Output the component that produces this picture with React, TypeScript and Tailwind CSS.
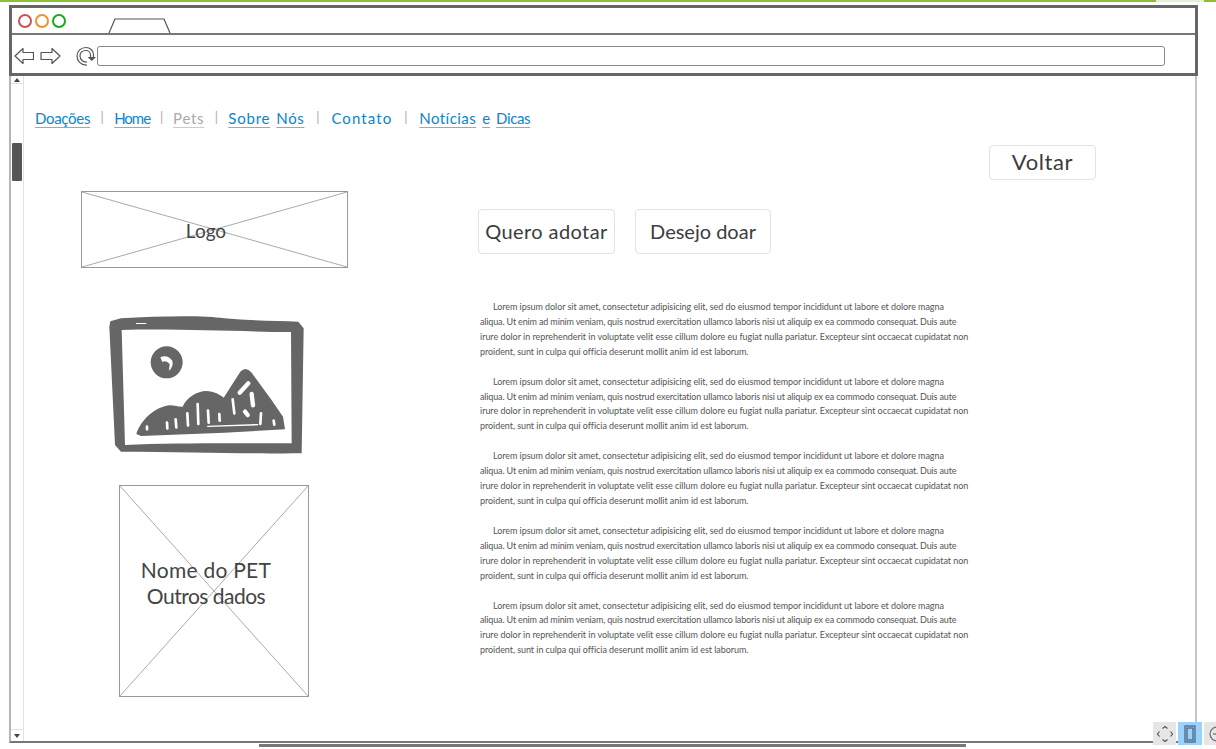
import React from "react";

const font = { fontFamily: '"Lato", "Noto Sans", sans-serif' };

const lines = [
  { t: "Lorem ipsum dolor sit amet, consectetur adipisicing elit, sed do eiusmod tempor incididunt ut labore et dolore magna", c: "pl-[13px] tracking-[-0.06px]" },
  { t: "aliqua. Ut enim ad minim veniam, quis nostrud exercitation ullamco laboris nisi ut aliquip ex ea commodo consequat. Duis aute", c: "tracking-[-0.15px]" },
  { t: "irure dolor in reprehenderit in voluptate velit esse cillum dolore eu fugiat nulla pariatur. Excepteur sint occaecat cupidatat non", c: "tracking-[-0.03px]" },
  { t: "proident, sunt in culpa qui officia deserunt mollit anim id est laborum.", c: "tracking-[-0.056px]" },
];

function Cross() {
  return (
    <svg className="absolute inset-0 w-full h-full" preserveAspectRatio="none" viewBox="0 0 100 100">
      <line x1="0" y1="0" x2="100" y2="100" stroke="#aaa" strokeWidth="1" vectorEffect="non-scaling-stroke" />
      <line x1="100" y1="0" x2="0" y2="100" stroke="#aaa" strokeWidth="1" vectorEffect="non-scaling-stroke" />
    </svg>
  );
}

function Btn({ children, c }: { children: React.ReactNode; c: string }) {
  return (
    <div className={`${c} h-full flex items-center justify-center whitespace-nowrap pb-[2px] border border-[#e2e2e2] rounded-sm text-[#3c3c3c]`}>
      {children}
    </div>
  );
}

function Sep({ w }: { w: string }) {
  return <span className={`${w} text-center text-[13px] text-[#aaa]`}>|</span>;
}

function Link({ children, gray, c }: { children: string; gray?: boolean; c: string }) {
  return (
    <span className={`${c} ${gray ? "text-[#aaa] decoration-[#ccc]" : "text-[#0a85cc] decoration-[#6bb8e6]"} underline underline-offset-[3px]`}>
      {children}
    </span>
  );
}

function PetIcon() {
  return (
    <svg width="230" height="170" viewBox="0 0 690 510" className="block">
      <path
        fill="#666"
        fillRule="evenodd"
        d="M58 64 L90 55 C200 48 340 45 400 55 C480 62 560 62 622 65 L638 85 L632 460 C500 462 300 455 90 455 L72 435 L55 80 Z M92 90 L102 435 C250 428 450 430 602 430 L600 96 C450 95 250 85 92 90 Z"
      />
      <path fill="#fff" d="M135 69 H166 V72 H135 Z" />
      <circle cx="227" cy="187" r="48" fill="#666" />
      <path d="M208 172 Q228 162 244 182 Q248 200 234 212 L236 192 Q226 180 214 186 Z" fill="#fff" />
      <path
        fill="#666"
        d="M136 402 C150 360 190 322 235 316 C255 316 265 322 275 320 C285 293 320 273 345 273 C370 273 388 285 398 293 L448 215 Q465 198 482 218 L540 298 L576 350 L582 388 L400 398 L150 408 Z"
      />
      <g fill="none" stroke="#fff" strokeLinecap="round">
        <path d="M168 380 L168 388 M228 368 L229 385 M254 358 L256 382 M289 340 L291 376 M320 312 L322 372 M351 332 L353 368 M385 342 L386 362 M425 298 L430 340 M510 340 L508 372 M548 362 L550 374" strokeWidth="8" />
        <path d="M446 278 L472 250 M482 282 L486 316 M462 335 L470 345" strokeWidth="13" />
        <path d="M350 379 L500 374" strokeWidth="4" />
      </g>
    </svg>
  );
}

export default function App() {
  return (
    <div className="relative w-[1216px] h-[749px] overflow-hidden bg-white text-[#333]" style={font}>
      {/* top progress strip */}
      <div className="flex h-[2px]">
        <div className="w-[1156px] bg-[#8bc034]" />
        <div className="w-[48px] bg-[#e6f0d4]" />
        <div className="flex-1 bg-[#8bc034]" />
      </div>

      {/* browser chrome */}
      <div className="ml-[9px] mt-[3px] w-[1189px] h-[71px] border-[3px] border-[#666] flex flex-col">
        <div className="h-[27px] border-b-2 border-[#777] flex items-center pl-[6px] relative">
          <div className="flex gap-[3px]">
            <div className="w-[14px] h-[14px] rounded-full border-2 border-[#c85555]" />
            <div className="w-[14px] h-[14px] rounded-full border-2 border-[#e8952f]" />
            <div className="w-[14px] h-[14px] rounded-full border-2 border-[#1aaa1a]" />
          </div>
          <svg width="64" height="16" viewBox="0 0 64 16" className="ml-[42px] self-end">
            <path d="M1 16 L7 2 L56 2 L62 16" fill="none" stroke="#555" strokeWidth="1.2" />
          </svg>
        </div>
        <div className="flex-1 flex items-center pl-[2px] pt-[4px]">
          <svg width="20" height="18" viewBox="0 0 20 18" className="shrink-0">
            <path d="M1 9 L9 1.5 L9 5.5 L19.5 5.5 L19.5 12.5 L9 12.5 L9 16.5 Z" fill="none" stroke="#555" strokeWidth="1.2" strokeLinejoin="round" />
          </svg>
          <svg width="21" height="18" viewBox="0 0 21 18" className="ml-[6px] shrink-0">
            <path d="M20 9 L12 1.5 L12 5.5 L1 5.5 L1 12.5 L12 12.5 L12 16.5 Z" fill="none" stroke="#555" strokeWidth="1.2" strokeLinejoin="round" />
          </svg>
          <svg width="20" height="20" viewBox="0 0 20 20" className="ml-[15px] shrink-0">
            <path d="M11 19 C4.5 19.5 1 14.5 1 10 C1 5 5 1.5 10 1.5 C14 1.5 17.5 4.5 17.5 8.5 L17.5 11 M11 16 C7 16.5 4 13.5 4 10 C4 6.5 6.5 4.5 10 4.5 C12.5 4.5 14.5 6.5 14.5 9 L14.5 11" fill="none" stroke="#555" strokeWidth="1.2" />
            <path d="M11.5 11 L20 11 L15.8 15 Z" fill="#555" />
          </svg>
          <div className="ml-[1px] w-[1068px] h-[20px] border border-[#888] rounded-[3px] shrink-0" />
        </div>
      </div>

      {/* page frame */}
      <div className="ml-[9px] w-[1188px] h-[667px] border-l-2 border-r-2 border-b-2 border-l-[#b5b5b5] border-r-[#c4c4c4] border-b-[#777] flex">
        {/* vertical scrollbar */}
        <div className="w-[13px] shrink-0 border-r border-[#e2e2e2] flex flex-col items-center relative">
          <div className="h-[8px] w-full border-b border-[#e2e2e2] flex justify-center">
            <div className="w-0 h-0 mt-[2px] border-x-[3px] border-x-transparent border-b-[4px] border-b-[#444]" />
          </div>
          <div className="mt-[59px] w-[10px] h-[38px] bg-[#555] rounded-[1px]" />
          <div className="mt-auto h-[12px] w-full border-t border-[#e2e2e2] flex justify-center items-center">
            <div className="w-0 h-0 border-x-[3px] border-x-transparent border-t-[4px] border-t-[#444]" />
          </div>
        </div>

        {/* page content */}
        <div className="flex-1 flex flex-col min-w-0">
          <nav className="mt-[30px] ml-[11px] h-[24px] flex items-center text-[15px] whitespace-nowrap">
            <Link c="tracking-[-0.3px]">Doações</Link>
            <Sep w="w-[24px]" />
            <Link c="tracking-[-1px]">Home</Link>
            <Sep w="w-[23px]" />
            <Link gray c="tracking-[0.7px]">Pets</Link>
            <Sep w="w-[24px]" />
            <Link c="tracking-[0.8px]">Sobre</Link>
            <span className="w-[6px]" />
            <Link c="tracking-[0.6px]">Nós</Link>
            <Sep w="w-[27px]" />
            <span className="text-[#0a85cc] tracking-[1.1px]">Contato</span>
            <Sep w="w-[27px]" />
            <Link c="tracking-[0.45px]">Notícias</Link>
            <span className="w-[6px]" />
            <Link c="tracking-[0px]">e</Link>
            <span className="w-[6px]" />
            <Link c="tracking-[-0.4px]">Dicas</Link>
          </nav>

          <div className="mt-[15px] h-[35px] flex justify-end pr-[99px]">
            <Btn c="w-[107px] text-[22px] tracking-[0.6px]">Voltar</Btn>
          </div>

          <div className="flex">
            <div className="w-[454px] shrink-0 flex flex-col pt-[11px]">
              <div className="relative ml-[57px] w-[267px] h-[77px] border border-[#999] flex items-center justify-center pr-[17px] pt-[4px] text-[19px] text-[#444]">
                <Cross />
                <span className="relative">Logo</span>
              </div>
              <div className="mt-[32px] ml-[67px]">
                <PetIcon />
              </div>
              <div className="relative mt-[15px] ml-[95px] w-[190px] h-[212px] border border-[#999] flex flex-col items-center justify-center pr-[16px] pb-[16px] text-[21px] leading-[26px] text-[#444]">
                <Cross />
                <span className="relative tracking-[0.25px]">Nome do PET</span>
                <span className="relative tracking-[-0.5px]">Outros dados</span>
              </div>
            </div>

            <div className="flex-1 flex flex-col pt-[29px]">
              <div className="h-[45px] flex gap-[20px]">
                <Btn c="w-[137px] text-[20px] tracking-[0.4px]">Quero adotar</Btn>
                <Btn c="w-[136px] text-[20px]">Desejo doar</Btn>
              </div>
              <div className="mt-[46px] ml-[2px] flex flex-col gap-[15px]">
                {[0, 1, 2, 3, 4].map((p) => (
                  <div key={p} className="text-[9px] leading-[14.9px] text-[#555] whitespace-nowrap">
                    {lines.map((l, i) => (
                      <div key={i} className={l.c}>{l.t}</div>
                    ))}
                  </div>
                ))}
              </div>
            </div>
          </div>
        </div>
      </div>

      {/* bottom scrollbar sliver */}
      <div className="absolute left-[259px] top-[744px] w-[707px] h-[3px] bg-[#777]" />

      {/* zoom controls floating over the page */}
      <div className="absolute left-[1153px] top-[722px] flex gap-[2px]">
        <div className="w-[23px] h-[23px] bg-[#e6e6e6] flex items-center justify-center">
          <svg width="18" height="18" viewBox="0 0 18 18" fill="none" stroke="#555" strokeWidth="1.2">
            <path d="M6.5 3.5 L9 1.5 L11.5 3.5 M6.5 14.5 L9 16.5 L11.5 14.5 M3.5 6.5 L1.5 9 L3.5 11.5 M14.5 6.5 L16.5 9 L14.5 11.5" />
          </svg>
        </div>
        <div className="w-[24px] h-[23px] bg-[#99d1ff] flex items-center justify-center">
          <svg width="12" height="18" viewBox="0 0 12 18" fill="none" stroke="#456" strokeWidth="1.1">
            <rect x="1" y="1" width="10" height="16" />
            <rect x="3" y="3" width="6" height="12" />
          </svg>
        </div>
        <div className="w-[23px] h-[23px] bg-[#e6e6e6] flex items-center pl-[4px]">
          <svg width="18" height="18" viewBox="0 0 18 18" fill="none" stroke="#666" strokeWidth="1.2">
            <circle cx="9" cy="9" r="7" />
            <path d="M5 9 H13" />
          </svg>
        </div>
      </div>
    </div>
  );
}
